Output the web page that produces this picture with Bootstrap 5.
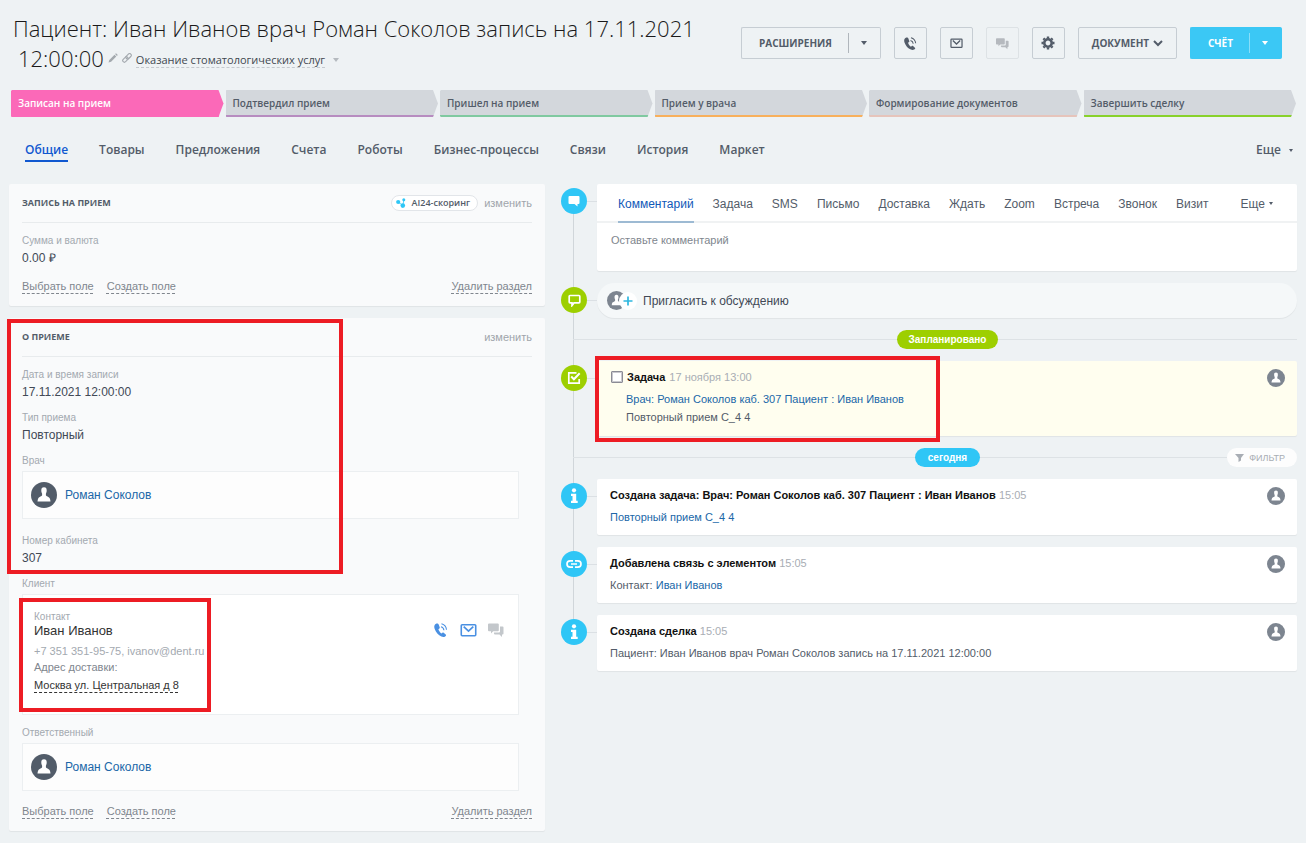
<!DOCTYPE html>
<html lang="ru">
<head>
<meta charset="utf-8">
<meta name="viewport" content="width=device-width, initial-scale=1">
<title>Сделка</title>
<link href="https://cdn.jsdelivr.net/npm/bootstrap@5.3.0/dist/css/bootstrap.min.css" rel="stylesheet">
<style>
:root{--ui:"Open Sans",sans-serif;--txt:"Liberation Sans",Arial,sans-serif}
body{background:#eef2f4;font:12px/16px var(--txt);color:#535c69}
a{color:#2067a8;text-decoration:none}
svg{display:block;flex:none}
.page{padding:13px 9px 11px}
/* header */
.deal-title{font:300 22px/30px var(--ui);color:#1a1a1a;margin:0}
.deal-title .second{padding-left:5px}
.funnel{font:400 11px/15px var(--ui);color:#414850;border-bottom:1px dashed #c5cacf;margin-top:4px}
.tools{gap:13px;padding:14px 15px 0 0}
.tool{height:32px;min-width:33px;padding:0 7px;border:1px solid #c6cdd3;border-radius:2px;color:#535c69;font:700 10px/16px var(--ui);display:inline-flex;align-items:center;justify-content:center}
.tool:hover{border-color:#a8adb4}
.tool:disabled{border-color:#dde2e5;opacity:1;color:#b5b9be}
.tool.doc{width:99px}
.split-main{border-right:0;padding:0 17px}
.split-main+.tool{border-left:0;padding:0;width:33px;justify-content:flex-start}
.split-main+.tool::before{content:"";width:1px;height:20px;background:currentColor;opacity:.4;margin-right:12px}
.tool.bill{background:#3bc8f5;border-color:#3bc8f5;color:#fff}
.caret{width:0;height:0;border:3px solid transparent;border-top:4px solid currentColor;border-bottom:0}
.caret.tiny{border-width:3px 2px 0}
/* stages */
.stages{gap:2px;padding:0 1px 0 2px;margin-top:17px}
.stage{flex:1 1 0;min-width:0;height:27px;border:0;border-bottom:2px solid var(--c);background:#d3d7dc;color:#535c69;font:600 10px/25px var(--ui);padding:1px 7px 0;text-align:left;white-space:nowrap;clip-path:polygon(0 1px,1px 0,calc(100% - 5px) 0,100% 50%,calc(100% - 5px) 100%,1px 100%,0 calc(100% - 1px))}
.stage.current{background:#fb69b8;color:#fff}
.tabs{gap:31px;padding:0 4px 0 16px;margin-top:24px;font:600 12px/18px var(--ui)}
.tabs a{color:#535c69;padding-bottom:1px;border-bottom:2px solid transparent}
.tabs a.active{color:#1058d0;border-color:#1058d0}
/* columns */
.board{display:grid;grid-template-columns:minmax(0,536fr) minmax(0,736fr);gap:16px;margin-top:22px}
.panel{background:#f9fafb;border-radius:2px;box-shadow:0 1px 1px rgba(0,0,0,.06);position:relative;padding:0 13px 11px}
.panel+.panel{margin-top:12px}
.panel-head{height:39px;border-bottom:1px solid #e8ebed;gap:6px}
.panel-head h2{font:700 9px/16px var(--ui);margin:0}
.edit{color:#a0a5ab;font-size:11px}
.scoring{border:1px solid #e2e5e9;border-radius:8px;background:#fff;color:#535c69;font:600 9px/14px var(--ui);padding:0 7px 0 4px;gap:6px}
.field{margin-top:9px}
.field .name{font-size:10px;line-height:18px;color:#a3a9b0}
.field .value{color:#414956}
.box{background:#fdfdfd;border:1px solid #eceff1;margin:1px 13px 0 0}
.person{height:48px;gap:8px;padding:0 8px;margin-bottom:13px}
.client{background:#fff;height:121px;padding:15px 14px 0 11px}
.panel-foot{margin-top:11px;gap:13px;line-height:18px;font-size:11px}
.dash{color:#80868e;text-decoration:underline dashed 1px;text-underline-offset:3px}
.kind{font-size:10px;line-height:14px;color:#a3a9b0}
.client-name{font-size:13px;line-height:14px;color:#333}
.reach{font-size:11px;line-height:16px;margin-top:5px;color:#a3a9b0}
.reach-label{font-size:11px;line-height:16px;color:#80868e}
.address{font-size:11px;line-height:20px;color:#333}
.client-icons{gap:11px;padding-top:12px}
/* highlights */
.frame{position:absolute;border:4px solid #ed1c24;pointer-events:none;z-index:3}
.frame-visit{left:-2px;top:1px;width:336px;height:255px}
.frame-client{left:-4px;top:3px;width:192px;height:114px}
.frame-task{left:-2px;top:-5px;right:357px;bottom:-6px}
/* timeline */
.timeline{position:relative;display:flex;flex-direction:column;gap:12px}
.timeline::before{content:"";position:absolute;left:12px;top:17px;bottom:38px;width:1px;background:#d0d6da}
.event{position:relative;display:flex;gap:10px}
.event::before{content:"";position:absolute;left:26px;top:17px;width:10px;height:1px;background:#dbe0e4}
.dot{width:26px;height:26px;border-radius:50%;background:#2fc6f6;margin-top:4px;position:relative;flex:none;display:flex;align-items:center;justify-content:center}
.dot.green{background:#9dcf00}
.note{flex:1;min-width:0;background:#fff;border-radius:2px;box-shadow:0 1px 1px rgba(0,0,0,.06);position:relative}
.note.entry{height:56px;padding:8px 12px 0 13px;font-size:11px}
.note h3{font:700 11px/16px var(--txt);color:#111;margin:0}
.when{color:#a8adb4;font-weight:400}
.note .line{margin-top:6px}
.kinds{gap:19px;padding:0 24px 0 21px;height:39px;border-bottom:2px solid #f0f2f3;align-items:stretch}
.kinds a{color:#535c69;line-height:40px;height:39px}
.kinds a.active{color:#1058b8;border-bottom:2px solid #9dbad3}
.comment{display:block;width:100%;height:48px;border:0;resize:none;padding:8px 14px;font-size:11px;line-height:18px;outline:0;background:transparent}
.comment::placeholder{color:#80868e;opacity:1}
.invite{height:35px;border-radius:18px;background:#f5f8f9;padding:0 10px;gap:6px;border:0;color:#414956;flex:1;box-shadow:0 1px 1px rgba(0,0,0,.06)}
.sep{position:relative;height:19px;display:flex;justify-content:center}
.sep::before{content:"";position:absolute;left:12px;right:0;top:9px;height:1px;background:#dde2e5}
.sep span{position:relative;margin-left:37px;border-radius:10px;color:#fff;font:700 10px/19px var(--txt);padding:0 12px;background:#9dcf00}
.sep .today{background:#2fc6f6;padding:0 13px}
.filter{position:absolute;right:0;top:0;height:19px;border:0;border-radius:10px;background:#fdfdfd;color:#a8adb4;font-size:9px;padding:0 12px 0 8px;display:flex;align-items:center;gap:5px}
.note.task{background:#fffeef;height:75px;padding:8px 12px 0 14px;font-size:11px}
.task input{appearance:none;width:12px;height:12px;margin:0 4px 0 0;border:1px solid #8b8b95;border-radius:1px;background:#fff;outline:1px solid #c9c9ce;outline-offset:-2px}
.task input:checked{background:#2067b0}
.task-text{padding-left:15px;margin-top:5px;line-height:18px}
</style>
</head>
<body>
<svg width="0" height="0" class="position-absolute" aria-hidden="true">
<symbol id="phone" viewBox="0 0 16 16"><path fill="currentColor" d="M3 1.800C1.400 2.600.8 4.500 1.600 6.800c1.200 3.500 3.800 6.400 6.800 7.700 1.800.8 3.700.4 4.500-.8.3-.5.2-1-.2-1.300l-2-1.700c-.4-.3-.9-.3-1.300 0l-.9.7C7 10.500 5.900 8.800 5.400 7.200l1-.8c.4-.3.5-.7.3-1.200L5.700 2.600c-.3-1-1.600-1.400-2.700-.8z"/><path d="M8 4.700a4 4 0 0 1 2.900 3.500M8.500 1.800a6.800 6.800 0 0 1 5 6" fill="none" stroke="currentColor" stroke-width="1.100"/></symbol>
<symbol id="mail" viewBox="0 0 16 16"><rect x="1.200" y="2.600" width="13.600" height="10.300" rx=".8" fill="none" stroke="currentColor" stroke-width="1.500"/><path d="M3.500 4.300L8 8.600l4.500-4.300" fill="none" stroke="currentColor" stroke-width="1.600"/></symbol>
<symbol id="chat" viewBox="0 0 16 16"><path fill="currentColor" d="M1 1.500h8.800q1 0 1 1v5.800q0 1-1 1H5.200L3 11.500V9.300H1q-1 0-1-1V2.500q0-1 1-1z"/><path fill="currentColor" d="M12 4.500h2.500q1 0 1 1v6q0 1-1 1H14V15l-2.500-2.500H7q-1 0-1-1v-1h5q1 0 1-1z"/></symbol>
<symbol id="user" viewBox="0 0 26 26"><circle cx="13" cy="13" r="13" fill="currentColor"/><path fill="#fff" d="M13 5.200c2 0 2.800 1.200 2.700 3.300 0 1.400-.4 2.500-.8 3.200v1.500c.2.900 2.900 1.500 3.700 2.700.6 1 .8 2.400.9 3.700h-13c.1-1.300.3-2.700.9-3.700.8-1.200 3.500-1.800 3.700-2.700v-1.500c-.4-.7-.8-1.800-.8-3.200-.1-2.100.7-3.300 2.700-3.300z"/></symbol>
<symbol id="info" viewBox="0 0 14 16"><circle cx="7" cy="2.300" r="2.100" fill="#fff"/><path fill="#fff" d="M4 5.700h5.200v7h1.500v2.300H4v-2.300h1.500V8H4z"/></symbol>
</svg>
<div class="page container-fluid">
<header class="d-flex justify-content-between align-items-start">
  <h1 class="deal-title ps-1 text-nowrap">
    <span class="d-block">Пациент: Иван Иванов врач Роман Соколов запись на 17.11.2021</span>
    <span class="second d-flex align-items-center">12:00:00
      <svg class="ms-1 me-1" width="10" height="10" viewBox="0 0 10 10"><path fill="#a3a9ae" d="M0.500 9.500l.8-2.600L6.500 1.700l1.800 1.800-5.200 5.200zM7.100 1.100L8 .3l1.800 1.800-.9.800z"/></svg>
      <svg class="me-1" width="10" height="10" viewBox="0 0 10 10"><g fill="none" stroke="#a3a9ae" stroke-width="1.100"><rect x="3.500" y="1.600" width="6.200" height="3.400" rx="1.700" transform="rotate(-45 6.600 3.300)"/><rect x=".3" y="4.800" width="6.200" height="3.400" rx="1.700" transform="rotate(-45 3.400 6.500)"/></g></svg>
      <a href="#" class="funnel">Оказание стоматологических услуг</a><i class="caret ms-2 mt-1" style="color:#b5babf"></i>
    </span>
  </h1>
  <div class="tools d-flex">
    <div class="btn-group"><button class="btn tool split-main">РАСШИРЕНИЯ</button><button class="btn tool" aria-label="Ещё"><i class="caret"></i></button></div>
    <button class="btn tool" aria-label="Позвонить"><svg width="15" height="15"><use href="#phone"/></svg></button>
    <button class="btn tool" aria-label="Письмо"><svg width="13" height="13"><use href="#mail"/></svg></button>
    <button class="btn tool" aria-label="Чат" disabled><svg width="13" height="13"><use href="#chat"/></svg></button>
    <button class="btn tool" aria-label="Настройки"><svg width="14" height="14" viewBox="-7 -7 14 14"><circle r="3.700" fill="none" stroke="currentColor" stroke-width="2.600"/><g stroke="currentColor" stroke-width="2.400"><path d="M0-6.500V-4.500M0 6.500V4.500M-6.500 0H-4.500M6.500 0H4.500M-4.600-4.600L-3.300-3.300M4.600 4.600L3.300 3.300M-4.600 4.600L-3.300 3.300M4.600-4.600L3.300-3.300"/></g></svg></button>
    <button class="btn tool doc">ДОКУМЕНТ<svg class="ms-1" width="10" height="10" viewBox="0 0 10 10"><path d="M1 3l4 4 4-4" fill="none" stroke="currentColor" stroke-width="2"/></svg></button>
    <div class="btn-group"><button class="btn tool bill split-main">СЧЁТ</button><button class="btn tool bill" aria-label="Ещё"><i class="caret"></i></button></div>
  </div>
</header>

<div class="stages d-flex">
  <button class="stage current" style="--c:#fb69b8">Записан на прием</button>
  <button class="stage" style="--c:#b78cc0">Подтвердил прием</button>
  <button class="stage" style="--c:#7fc9a0">Пришел на прием</button>
  <button class="stage" style="--c:#f8b05c">Прием у врача</button>
  <button class="stage" style="--c:#e6c4bb">Формирование документов</button>
  <button class="stage" style="--c:#88d12b">Завершить сделку</button>
</div>

<nav class="tabs d-flex">
  <a href="#" class="active">Общие</a><a href="#">Товары</a><a href="#">Предложения</a><a href="#">Счета</a><a href="#">Роботы</a><a href="#">Бизнес-процессы</a><a href="#">Связи</a><a href="#">История</a><a href="#">Маркет</a>
  <a href="#" class="ms-auto d-flex align-items-center">Еще<i class="caret tiny ms-2"></i></a>
</nav>

<main class="board">
<div>
  <section class="panel">
    <div class="panel-head d-flex align-items-center">
      <h2 class="me-auto">ЗАПИСЬ НА ПРИЕМ</h2>
      <button class="scoring d-flex align-items-center"><svg width="10" height="10" viewBox="0 0 10 10"><g fill="#2fc6f6"><circle cx="2.200" cy="4" r="2.100"/><circle cx="7.800" cy="1.800" r="1.500"/><circle cx="6.800" cy="7.600" r="2.300"/></g><path d="M2 4l5 3.500.8-6" stroke="#2fc6f6" fill="none" stroke-width=".8"/></svg>AI24-скоринг</button>
      <a href="#" class="edit">изменить</a>
    </div>
    <div class="field"><div class="name">Сумма и валюта</div><div class="value">0.00 ₽</div></div>
    <div class="panel-foot d-flex"><a href="#" class="dash">Выбрать поле</a><a href="#" class="dash">Создать поле</a><a href="#" class="dash ms-auto">Удалить раздел</a></div>
  </section>

  <section class="panel">
    <div class="frame frame-visit"></div>
    <div class="panel-head d-flex align-items-center"><h2 class="me-auto">О ПРИЕМЕ</h2><a href="#" class="edit">изменить</a></div>
    <div class="field"><div class="name">Дата и время записи</div><div class="value">17.11.2021 12:00:00</div></div>
    <div class="field"><div class="name">Тип приема</div><div class="value">Повторный</div></div>
    <div class="field"><div class="name">Врач</div>
      <div class="box person d-flex align-items-center"><svg width="26" height="26" color="#525c69"><use href="#user"/></svg><a href="#">Роман Соколов</a></div></div>
    <div class="field"><div class="name">Номер кабинета</div><div class="value">307</div></div>
    <div class="field"><div class="name">Клиент</div>
      <div class="box client position-relative d-flex justify-content-between">
        <div class="frame frame-client"></div>
        <div>
          <div class="kind">Контакт</div>
          <div class="client-name">Иван Иванов</div>
          <div class="reach">+7 351 351-95-75, ivanov@dent.ru</div>
          <div class="reach-label">Адрес доставки:</div>
          <a href="#" class="dash address">Москва ул. Центральная д 8</a>
        </div>
        <div class="client-icons d-flex">
          <a href="#" aria-label="Позвонить"><svg width="16" height="16" color="#4a90e2"><use href="#phone"/></svg></a>
          <a href="#" aria-label="Письмо"><svg width="17" height="17" color="#4a90e2"><use href="#mail"/></svg></a>
          <a href="#" aria-label="Чат"><svg width="16" height="16" color="#c3c7cb"><use href="#chat"/></svg></a>
        </div>
      </div></div>
    <div class="field"><div class="name">Ответственный</div>
      <div class="box person mb-0 d-flex align-items-center"><svg width="26" height="26" color="#525c69"><use href="#user"/></svg><a href="#">Роман Соколов</a></div></div>
    <div class="panel-foot d-flex"><a href="#" class="dash">Выбрать поле</a><a href="#" class="dash">Создать поле</a><a href="#" class="dash ms-auto">Удалить раздел</a></div>
  </section>
</div>

<div class="timeline align-self-start">
  <div class="event">
    <div class="dot"><svg width="12" height="12" viewBox="0 0 12 12"><path fill="#fff" d="M1.500 1h9q1 0 1 1v6q0 1-1 1H9.500v2.500L6.500 9h-5q-1 0-1-1V2q0-1 1-1z"/></svg></div>
    <div class="note">
      <nav class="kinds d-flex"><a href="#" class="active">Комментарий</a><a href="#">Задача</a><a href="#">SMS</a><a href="#">Письмо</a><a href="#">Доставка</a><a href="#">Ждать</a><a href="#">Zoom</a><a href="#">Встреча</a><a href="#">Звонок</a><a href="#">Визит</a><a href="#" class="ms-auto d-flex align-items-center">Еще<i class="caret tiny ms-1"></i></a></nav>
      <textarea class="comment" aria-label="Комментарий" placeholder="Оставьте комментарий"></textarea>
    </div>
  </div>
  <div class="event">
    <div class="dot green"><svg width="13" height="13" viewBox="0 0 13 13"><path fill="none" stroke="#fff" stroke-width="1.700" d="M2 1.500h9q.8 0 .8.800v5.800q0 .8-.8.800H6L4 11.500V8.900H2q-.8 0-.8-.8V2.300q0-.8.8-.8z"/></svg></div>
    <button class="invite d-flex align-items-center"><svg width="30" height="20" viewBox="0 0 30 20"><svg width="19" height="19" color="#7d8590"><use href="#user"/></svg><circle cx="21" cy="10" r="9" fill="#fff"/><path d="M21 5.500v9M16.500 10h9" stroke="#2fb8e0" stroke-width="1.700"/></svg>Пригласить к обсуждению</button>
  </div>
  <div class="sep"><span>Запланировано</span></div>
  <div class="event">
    <div class="dot green"><svg width="14" height="14" viewBox="0 0 14 14"><path fill="none" stroke="#fff" stroke-width="1.700" d="M9.500 1.800H1.800v10.400h10.400V8"/><path d="M4.200 5.500l2.700 2.700 5.800-6" fill="none" stroke="#fff" stroke-width="2"/></svg></div>
    <div class="note task">
      <div class="frame frame-task"></div>
      <div class="d-flex align-items-start justify-content-between">
        <div>
          <h3 class="d-flex align-items-center"><input type="checkbox" id="done"><label for="done">Задача</label><span class="when ms-1">17 ноября 13:00</span></h3>
          <div class="task-text"><a href="#">Врач: Роман Соколов каб. 307 Пациент : Иван Иванов</a><br>Повторный прием С_4 4</div>
        </div>
        <svg width="18" height="18" color="#7d8590"><use href="#user"/></svg>
      </div>
    </div>
  </div>
  <div class="sep"><span class="today">сегодня</span><button class="filter"><svg width="9" height="8" viewBox="0 0 9 8"><path fill="#a8adb4" d="M0 0h9L6 4v2.500L3.500 8V4z"/></svg>ФИЛЬТР</button></div>
  <div class="event">
    <div class="dot"><svg width="14" height="16"><use href="#info"/></svg></div>
    <div class="note entry d-flex justify-content-between"><div><h3>Создана задача: Врач: Роман Соколов каб. 307 Пациент : Иван Иванов <span class="when">15:05</span></h3><div class="line"><a href="#">Повторный прием С_4 4</a></div></div><svg width="18" height="18" color="#7d8590"><use href="#user"/></svg></div>
  </div>
  <div class="event">
    <div class="dot"><svg width="16" height="10" viewBox="0 0 16 10"><path d="M7 1.800H4.200a3.200 3.200 0 0 0 0 6.400H7M9 1.800h2.800a3.200 3.200 0 0 1 0 6.400H9M5 5h6" fill="none" stroke="#fff" stroke-width="1.700"/></svg></div>
    <div class="note entry d-flex justify-content-between"><div><h3>Добавлена связь с элементом <span class="when">15:05</span></h3><div class="line">Контакт: <a href="#">Иван Иванов</a></div></div><svg width="18" height="18" color="#7d8590"><use href="#user"/></svg></div>
  </div>
  <div class="event">
    <div class="dot"><svg width="14" height="16"><use href="#info"/></svg></div>
    <div class="note entry d-flex justify-content-between"><div><h3>Создана сделка <span class="when">15:05</span></h3><div class="line">Пациент: Иван Иванов врач Роман Соколов запись на 17.11.2021 12:00:00</div></div><svg width="18" height="18" color="#7d8590"><use href="#user"/></svg></div>
  </div>
</div>
</main>
</div>
<script src="https://cdn.jsdelivr.net/npm/bootstrap@5.3.0/dist/js/bootstrap.bundle.min.js"></script>
</body>
</html>
